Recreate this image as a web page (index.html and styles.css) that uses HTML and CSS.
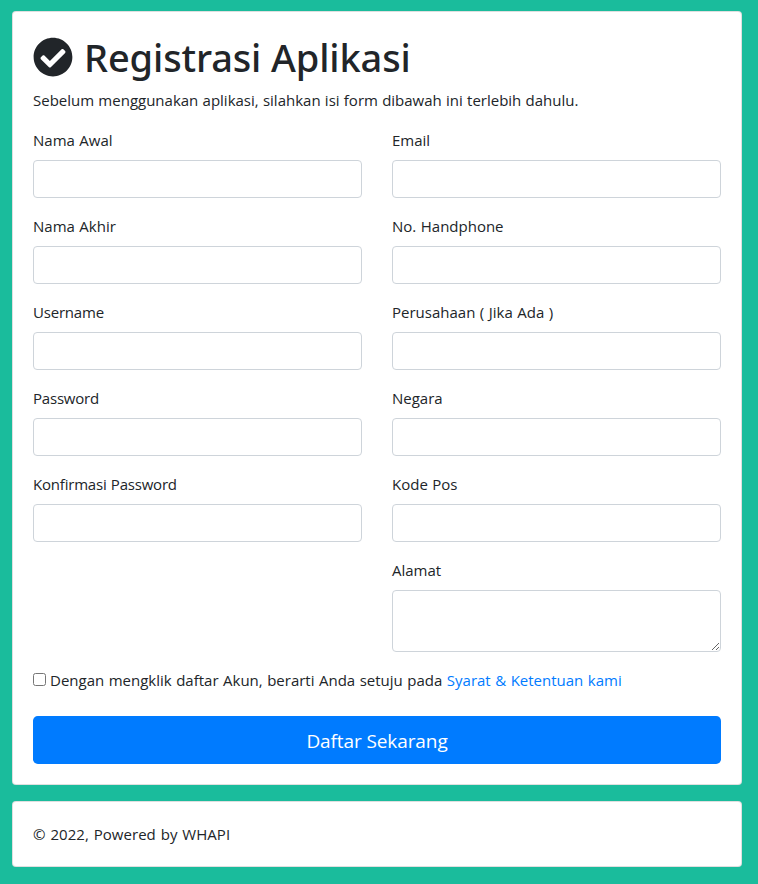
FILE: index.html
```html
<!DOCTYPE html>
<html lang="id">
<head>
    <meta charset="UTF-8">
    <meta name="viewport" content="width=device-width, initial-scale=1.0">
    <title>Registrasi Aplikasi</title>
    <link rel="stylesheet" href="styles.css">
</head>
<body>
    <div class="card">
        <h1>
            <svg class="icon" viewBox="0 0 512 512" aria-hidden="true"><path fill="currentColor" d="M504 256c0 136.967-111.033 248-248 248S8 392.967 8 256 119.033 8 256 8s248 111.033 248 248zM227.314 387.314l184-184c6.248-6.248 6.248-16.379 0-22.627l-22.627-22.627c-6.248-6.249-16.379-6.249-22.628 0L216 308.118l-70.059-70.059c-6.248-6.248-16.379-6.248-22.628 0l-22.627 22.627c-6.248 6.248-6.248 16.379 0 22.627l104 104c6.249 6.249 16.379 6.249 22.628.001z"/></svg>
            <span class="title">Registrasi Aplikasi</span>
        </h1>
        <p class="intro">Sebelum menggunakan aplikasi, silahkan isi form dibawah ini terlebih dahulu.</p>

        <form>
            <div class="row">
                <div class="col">
                    <div class="form-group">
                        <label for="firstName">Nama Awal</label>
                        <input type="text" class="form-control" id="firstName">
                    </div>
                    <div class="form-group">
                        <label for="lastName">Nama Akhir</label>
                        <input type="text" class="form-control" id="lastName">
                    </div>
                    <div class="form-group account">
                        <label for="username">Username</label>
                        <input type="text" class="form-control" id="username">
                    </div>
                    <div class="form-group account">
                        <label for="password">Password</label>
                        <input type="password" class="form-control" id="password">
                    </div>
                    <div class="form-group account">
                        <label for="confirmPassword">Konfirmasi Password</label>
                        <input type="password" class="form-control" id="confirmPassword">
                    </div>
                </div>
                <div class="col">
                    <div class="form-group">
                        <label for="email">Email</label>
                        <input type="email" class="form-control" id="email">
                    </div>
                    <div class="form-group">
                        <label for="phone">No. Handphone</label>
                        <input type="text" class="form-control" id="phone">
                    </div>
                    <div class="form-group">
                        <label for="company">Perusahaan ( Jika Ada )</label>
                        <input type="text" class="form-control" id="company">
                    </div>
                    <div class="form-group">
                        <label for="country">Negara</label>
                        <input type="text" class="form-control" id="country">
                    </div>
                    <div class="form-group">
                        <label for="zip">Kode Pos</label>
                        <input type="text" class="form-control" id="zip">
                    </div>
                    <div class="form-group">
                        <label for="address">Alamat</label>
                        <textarea class="form-control" id="address"></textarea>
                    </div>
                </div>
            </div>

            <div class="terms">
                <input type="checkbox" id="agree">
                <span class="terms-text">Dengan mengklik daftar Akun, berarti Anda setuju pada <a href="#">Syarat &amp; Ketentuan kami</a></span>
            </div>
            <button type="submit" class="btn">Daftar Sekarang</button>
        </form>
    </div>

    <div class="card">
        <p class="footer-text">© 2022, Powered by WHAPI</p>
    </div>
</body>
</html>
```
FILE: styles.css
```css
* {
    box-sizing: border-box;
}
body {
    margin: 0;
    padding: 11px 16px 0 12px;
    background-color: #1abc9c;
    color: #212529;
    font-family: "Open Sans", "Noto Sans", sans-serif;
    font-size: 15px;
    line-height: 24px;
    word-spacing: 0.6px;
}
.card {
    background-color: #fff;
    border: 1px solid rgba(0, 0, 0, 0.125);
    border-radius: 4px;
    padding: 20px;
    margin-bottom: 16px;
}
h1 {
    display: flex;
    align-items: center;
    gap: 11px;
    height: 50px;
    margin: 0 0 6px;
    font-family: "Noto Sans", "Open Sans", sans-serif;
    font-size: 38px;
    font-weight: 500;
    line-height: 50px;
    letter-spacing: -0.12px;
    word-spacing: 0;
}
.icon {
    width: 40px;
    height: 40px;
}
p {
    margin: 0;
}
.intro {
    margin-bottom: 16px;
    word-spacing: 0.35px;
}
.row {
    display: grid;
    grid-template-columns: 1fr 1fr;
    gap: 30px;
}
.form-group {
    margin-bottom: 16px;
}
label {
    display: block;
    margin-bottom: 8px;
}
.account label {
    letter-spacing: -0.2px;
}
.form-control {
    display: block;
    width: 100%;
    height: 38px;
    padding: 6px 12px;
    border: 1px solid #ced4da;
    border-radius: 4px;
    background-color: #fff;
    font: inherit;
}
textarea.form-control {
    height: 62px;
    resize: vertical;
}
.terms {
    display: flex;
    align-items: center;
    gap: 4px;
    height: 24px;
    margin-bottom: 24px;
}
.terms input {
    width: 13px;
    height: 13px;
    margin: 0 0 1px;
}
a {
    color: #007bff;
    text-decoration: none;
}
.footer-text {
    letter-spacing: 0.05px;
    word-spacing: 0.9px;
}
.btn {
    display: block;
    width: 100%;
    height: 48px;
    padding: 2px 0 0;
    border: 0;
    border-radius: 4.8px;
    background-color: #007bff;
    color: #fff;
    font-family: inherit;
    font-size: 19px;
    line-height: 46px;
    letter-spacing: -0.1px;
    cursor: pointer;
}
```
